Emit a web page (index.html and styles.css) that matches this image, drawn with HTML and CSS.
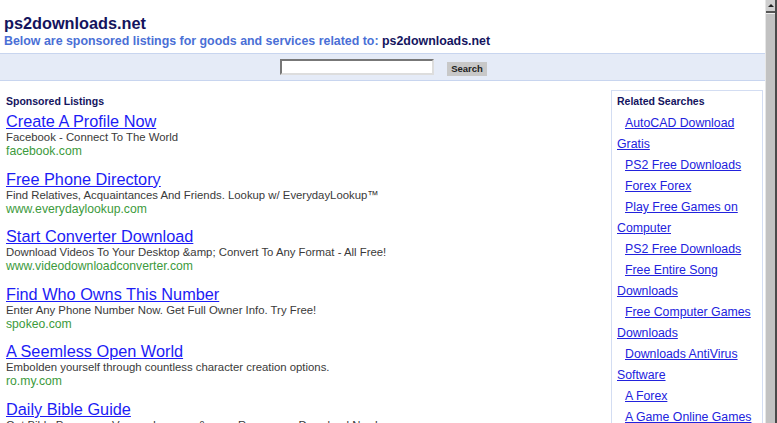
FILE: index.html
```html
<!DOCTYPE html>
<html lang="en">
<head>
  <meta charset="UTF-8" />
  <title>ps2downloads.net</title>
  <link rel="stylesheet" href="styles.css">
</head>
<body>
  <div class="page">
    <div class="header">
      <h1>ps2downloads.net</h1>
      <p class="tagline">Below are sponsored listings for goods and services related to: <span>ps2downloads.net</span></p>
    </div>

    <form class="searchbar">
      <input type="text" class="searchbox" />
      <button type="button" class="searchbtn">Search</button>
    </form>

    <div class="content">
      <div class="listings">
        <h3>Sponsored Listings</h3>

        <div class="ad">
          <a href="#">Create A Profile Now</a>
          <div class="desc">Facebook - Connect To The World</div>
          <div class="url">facebook.com</div>
        </div>
        <div class="ad">
          <a href="#">Free Phone Directory</a>
          <div class="desc">Find Relatives, Acquaintances And Friends. Lookup w/ EverydayLookup™</div>
          <div class="url">www.everydaylookup.com</div>
        </div>
        <div class="ad">
          <a href="#">Start Converter Download</a>
          <div class="desc">Download Videos To Your Desktop &amp;amp; Convert To Any Format - All Free!</div>
          <div class="url">www.videodownloadconverter.com</div>
        </div>
        <div class="ad">
          <a href="#">Find Who Owns This Number</a>
          <div class="desc">Enter Any Phone Number Now. Get Full Owner Info. Try Free!</div>
          <div class="url">spokeo.com</div>
        </div>
        <div class="ad">
          <a href="#">A Seemless Open World</a>
          <div class="desc">Embolden yourself through countless character creation options.</div>
          <div class="url">ro.my.com</div>
        </div>
        <div class="ad">
          <a href="#">Daily Bible Guide</a>
          <div class="desc">Get Bible Passages, Verses, Lessons &amp; more Resources. Download Now!</div>
          <div class="url">dailybibleguide.com</div>
        </div>
      </div>

      <div class="related">
        <h3>Related Searches</h3>
        <ul>
          <li><a href="#">AutoCAD Download Gratis</a></li>
          <li><a href="#">PS2 Free Downloads</a></li>
          <li><a href="#">Forex Forex</a></li>
          <li><a href="#">Play Free Games on Computer</a></li>
          <li><a href="#">PS2 Free Downloads</a></li>
          <li><a href="#">Free Entire Song Downloads</a></li>
          <li><a href="#">Free Computer Games Downloads</a></li>
          <li><a href="#">Downloads AntiVirus Software</a></li>
          <li><a href="#">A Forex</a></li>
          <li><a href="#">A Game Online Games</a></li>
        </ul>
      </div>
    </div>
  </div>

  <div class="scrollbar">
    <div class="arrow"></div>
    <div class="thumb"></div>
  </div>
</body>
</html>
```

FILE: styles.css
```css
html, body {
  height: 100%;
}

body {
  margin: 0;
  display: flex;
  overflow: hidden;
  background: #fff;
  font-family: "Liberation Sans", Arial, sans-serif;
}

.page {
  flex: 1;
  min-width: 0;
}

.header {
  padding: 13px 4px 0;
}

h1 {
  margin: 0;
  font-size: 16.3px;
  line-height: 20px;
  color: #14145e;
}

.tagline {
  margin: 0;
  font-size: 12.4px;
  line-height: 17px;
  font-weight: bold;
  color: #4a6fd6;
  white-space: nowrap;
}

.tagline span {
  color: #14145e;
}

.searchbar {
  margin: 3px 0 0;
  height: 26px;
  display: flex;
  align-items: center;
  justify-content: center;
  gap: 13px;
  background: #e5ebf7;
  border-top: 1px solid #c8d5ef;
  border-bottom: 1px solid #c8d5ef;
}

.searchbox {
  width: 150px;
  height: 12px;
  padding: 0;
  margin: 0 0 1px 2px;
  border: 2px solid #777;
  border-right-color: #ddd;
  border-bottom-color: #ddd;
  background: #fff;
}

.searchbtn {
  width: 40px;
  height: 14px;
  margin-top: 3px;
  padding: 0;
  border: none;
  background: #c8c8c8;
  font-family: "Liberation Sans", Arial, sans-serif;
  font-weight: bold;
  font-size: 9.5px;
  color: #222;
}

.content {
  display: flex;
  align-items: flex-start;
  padding-top: 9px;
}

.listings {
  flex: 1;
  padding: 0 6px;
}

h3 {
  margin: 0;
  font-size: 10.5px;
  line-height: 20px;
  color: #14145e;
}

.listings h3 {
  margin-top: 1px;
  margin-bottom: 1px;
}

.ad {
  height: 57.6px;
}

.ad a {
  display: block;
  width: max-content;
  font-size: 16.3px;
  line-height: 18px;
  color: #1c1cf5;
}

.desc {
  font-size: 11.35px;
  line-height: 14px;
  color: #3a3a3a;
  white-space: nowrap;
}

.url {
  font-size: 12.2px;
  line-height: 14px;
  color: #3c9a3c;
}

.related {
  width: 140px;
  margin-right: 2px;
  padding: 0 5px;
  border: 1px solid #d3ddf2;
  border-bottom: none;
}

.related ul {
  list-style: none;
  margin: 2px 0 0;
  padding: 0;
}

.related li {
  text-indent: 8px;
  font-size: 12.3px;
  line-height: 21px;
}

.related a {
  color: #2222dd;
}

.scrollbar {
  width: 9px;
  flex: none;
  display: flex;
  flex-direction: column;
  border-left: 1px solid #e6e6e6;
  border-right: 2px solid #4a4a4a;
  background: #c2c2c2;
}

.arrow {
  height: 11px;
  border-bottom: 2px solid #555;
  position: relative;
  background: #cfcfcf;
}

.arrow::after {
  content: "";
  position: absolute;
  left: 2px;
  top: 4px;
  border-left: 3px solid transparent;
  border-right: 3px solid transparent;
  border-bottom: 3px solid #222;
}

.thumb {
  flex: 1;
  border-top: 1px solid #eee;
}
```
